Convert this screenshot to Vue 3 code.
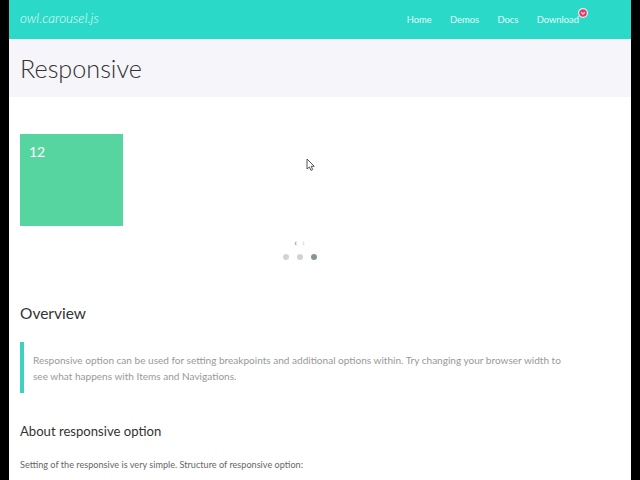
<script setup>
const links = ['Home', 'Demos', 'Docs', 'Download']
const dots = [false, false, true]
</script>

<template>
  <div class="frame">
    <div class="page">
      <header class="nav">
        <span class="logo">owl.carousel.js</span>
        <nav class="links">
          <a v-for="l in links" :key="l" class="link">{{ l }}</a>
          <span class="badge"><svg width="10" height="10" viewBox="0 0 10 10"><circle cx="5" cy="5" r="4.4" fill="#d8406a" stroke="#f4e6ec" stroke-width="1.2"/><path d="M3.2 4.2 5 6 6.8 4.2" fill="none" stroke="#f7c6d6" stroke-width="1.3"/></svg></span>
        </nav>
      </header>
      <div class="band"><h1>Responsive</h1></div>
      <main class="content">
        <div class="item">12</div>
        <div class="arrows"><span>‹</span><span class="next">›</span></div>
        <div class="dots"><i v-for="(d, i) in dots" :key="i" :class="{ on: d }"></i></div>
        <h2>Overview</h2>
        <blockquote>Responsive option can be used for setting breakpoints and additional options within. Try changing your browser width to see what happens with Items and Navigations.</blockquote>
        <h3>About responsive option</h3>
        <p>Setting of the responsive is very simple. Structure of responsive option:</p>
      </main>
      <svg class="cursor" width="10" height="14" viewBox="0 0 10 14"><path d="M1 1v10l2.4-2 1.6 3.4 1.7-.8L5.2 8.3H8.2Z" fill="#fff" stroke="#555" stroke-width="1"/></svg>
    </div>
  </div>
</template>

<style>
html, body { margin: 0; background: #000; }
</style>

<style scoped>
.frame { width: 640px; height: 480px; background: #000; padding: 0 9px; box-sizing: border-box; overflow: hidden; }
.page { position: relative; width: 622px; height: 480px; background: #fff; overflow: hidden; font-family: Lato, sans-serif; color: #444; }
.nav { height: 39px; background: #2bd9c9; display: flex; align-items: center; justify-content: space-between; padding: 0 52px 0 11px; box-sizing: border-box; color: #fff; }
.logo { font-size: 13.5px; font-style: italic; font-weight: 300; color: #e4fbf8; margin-bottom: 4px; }
.links { position: relative; display: flex; gap: 18.3px; font-size: 9.4px; color: #e4fbf8; }
.badge { position: absolute; right: -9px; top: -6px; width: 10px; height: 10px; line-height: 0; }
.band { height: 58px; background: #f6f5f9; display: flex; align-items: center; padding-left: 11px; }
h1 { margin: 0; font-size: 25.2px; font-weight: 300; color: #333; }
.content { padding: 37px 52px 0 11px; }
.item { width: 103px; height: 92px; background: #56d5a0; color: #fff; font-size: 14px; padding: 9px; box-sizing: border-box; }
.arrows { display: flex; justify-content: center; gap: 5px; margin-top: 9px; height: 14px; font-size: 10px; line-height: 14px; color: #777; }
.next { color: #ccc; }
.dots { display: flex; justify-content: center; gap: 8px; margin-top: 5px; }
.dots i { width: 6px; height: 6px; border-radius: 50%; background: #d2d2d2; }
.dots i.on { background: #869791; }
h2 { margin: 43px 0 0; font-size: 15.5px; line-height: 20px; font-weight: 400; color: #333; }
blockquote { margin: 19px 0 0; border-left: 4px solid #3fd0c2; padding: 10px 13px 9px 9px; font-size: 10.06px; line-height: 16px; color: #999; }
h3 { margin: 29px 0 0; font-size: 13.1px; line-height: 18px; font-weight: 400; color: #333; }
p { margin: 18px 0 0; font-size: 9.15px; line-height: 14px; color: #666; }
.cursor { position: absolute; left: 297px; top: 158px; }
</style>
